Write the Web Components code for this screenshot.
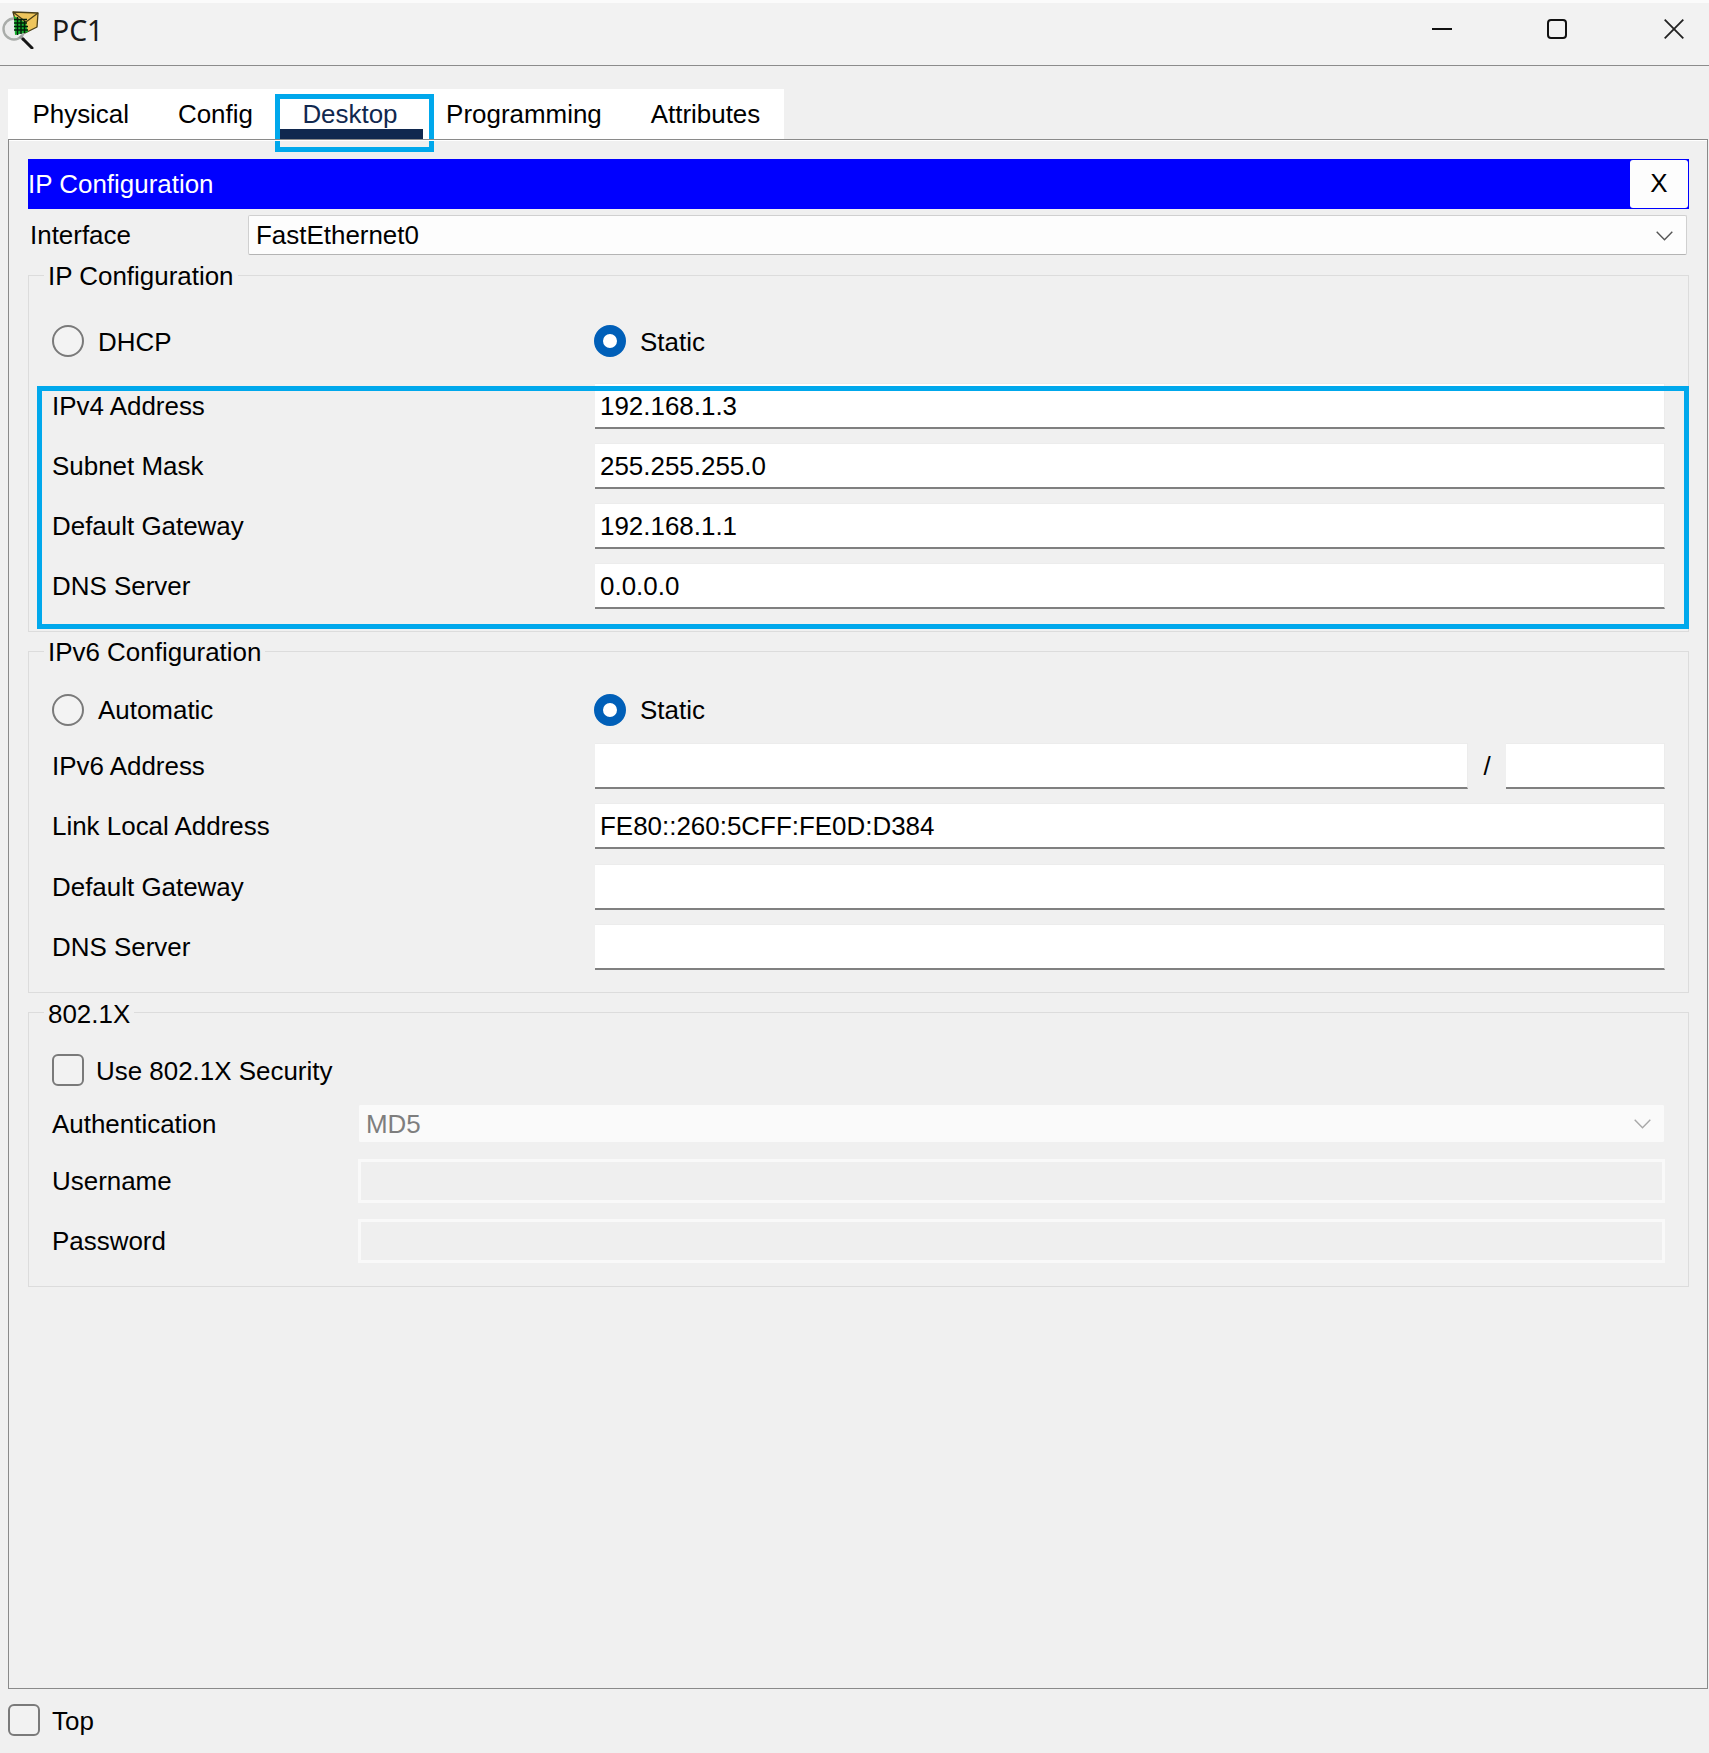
<!DOCTYPE html>
<html lang="en"><head><meta charset="utf-8"><title>PC1</title>
<style>
html,body{margin:0;padding:0;background:#f0f0f0}
body{width:1709px;height:1753px;overflow:hidden;font:25.95px/30px "Liberation Sans",Arial,sans-serif;color:#000}
</style></head><body>
<pt-window>
  <pt-titlebar slot="title">PC1</pt-titlebar>
  <pt-tabs slot="tabs">
    <pt-tab>Physical</pt-tab><pt-tab>Config</pt-tab><pt-tab active>Desktop</pt-tab><pt-tab>Programming</pt-tab><pt-tab>Attributes</pt-tab>
  </pt-tabs>
  <pt-panel slot="panel">
    <pt-appbar>IP Configuration</pt-appbar>
    <pt-row col="218px" style="margin:6px 2px 0 2px;height:40px">Interface<pt-select slot="control">FastEthernet0</pt-select></pt-row>
    <pt-group style="margin-top:5px;--pb:22px"><span slot="legend">IP Configuration</span>
      <pt-choice style="margin-top:35px;--ty:2px"><pt-radio>DHCP</pt-radio><pt-radio checked slot="second">Static</pt-radio></pt-choice>
      <pt-row style="margin-top:26px">IPv4 Address<pt-input slot="control">192.168.1.3</pt-input></pt-row>
      <pt-row>Subnet Mask<pt-input slot="control">255.255.255.0</pt-input></pt-row>
      <pt-row>Default Gateway<pt-input slot="control">192.168.1.1</pt-input></pt-row>
      <pt-row>DNS Server<pt-input slot="control">0.0.0.0</pt-input></pt-row>
    </pt-group>
    <pt-group style="margin-top:4px;--pb:22px"><span slot="legend">IPv6 Configuration</span>
      <pt-choice style="margin-top:28px"><pt-radio>Automatic</pt-radio><pt-radio checked slot="second">Static</pt-radio></pt-choice>
      <pt-row style="margin-top:17px">IPv6 Address<pt-split slot="control"><pt-input></pt-input><pt-input slot="tail"></pt-input></pt-split></pt-row>
      <pt-row>Link Local Address<pt-input slot="control">FE80::260:5CFF:FE0D:D384</pt-input></pt-row>
      <pt-row style="margin-top:15px">Default Gateway<pt-input slot="control"></pt-input></pt-row>
      <pt-row>DNS Server<pt-input slot="control"></pt-input></pt-row>
    </pt-group>
    <pt-group style="margin-top:4px;--pb:23px;--lh:34px"><span slot="legend">802.1X</span>
      <pt-check gap="12px" style="margin-top:27px;--ty:2px">Use 802.1X Security</pt-check>
      <pt-row col="306px" style="margin-top:18px;height:39px">Authentication<pt-select slot="control" disabled>MD5</pt-select></pt-row>
      <pt-row col="306px" style="margin-top:16px;height:44px">Username<pt-disabled-input slot="control"></pt-disabled-input></pt-row>
      <pt-row col="306px" style="margin-top:16px;height:44px">Password<pt-disabled-input slot="control"></pt-disabled-input></pt-row>
    </pt-group>
    <pt-highlight style="left:28px;top:246px;width:1652px;height:243px"></pt-highlight>
  </pt-panel>
  <pt-check slot="footer" gap="12px" style="margin:15px 0 0 8px;--ty:2px">Top</pt-check>
</pt-window>
<script>
const def=(name,css,html,extra)=>{
  class C extends HTMLElement{
    constructor(){super();const r=this.attachShadow({mode:'open'});r.innerHTML='<style>'+css+'</style>'+html;}
    connectedCallback(){if(extra)extra(this)}
  }
  customElements.define(name,C);
};
def('pt-window',':host{display:block;position:relative;width:1709px;height:1753px}',
 '<slot name="title"></slot><slot name="tabs"></slot><slot name="panel"></slot><slot name="footer"></slot>');
def('pt-titlebar',`:host{display:flex;align-items:flex-start;box-sizing:border-box;height:66px;border-top:3px solid #fbfbfb;border-bottom:1px solid #8c8c8c;background:#f2f2f2;color:#1a1a1a;font:28.4px/32px "Noto Sans","Open Sans",sans-serif}
 .logo{width:40px;height:42px;margin:4px 11px 0 2px;flex:none}
 .t{flex:1;margin:11px 0 0 -1px}
 .b{width:20px;height:20px;flex:none;display:block;margin-top:16px}`,
 `<svg class="logo" viewBox="0 0 40 42" aria-hidden="true">
   <circle cx="12" cy="22" r="10.5" fill="#ececec" stroke="#a9aca9" stroke-width="2.4"/>
   <path d="M11 5 L36 6 L35 20 L23 26 L15 20Z" fill="#eec55c" stroke="#4a3f17" stroke-width="1.3" stroke-linejoin="round"/>
   <path d="M11 5 L24 15 L36 6" fill="none" stroke="#4a3f17" stroke-width="1.3"/>
   <path d="M12 9 L24 16 L26 25 L13 28Z" fill="#16b22e"/>
   <path d="M12 12.5 H25 M12 16 H25 M12 19.5 H26 M12 23 H26 M15.5 10 V28 M19 12 V27 M22.5 14 V26" stroke="#04200a" stroke-width="1.5"/>
   <path d="M18 29 L22 33" stroke="#9a9a9a" stroke-width="3.2"/>
   <path d="M21 32 L30 41" stroke="#161616" stroke-width="3" stroke-linecap="round"/>
  </svg><span class="t"><slot></slot></span>
  <svg class="b" style="margin-right:95px" viewBox="0 0 20 20" aria-hidden="true"><path d="M0 10H20" stroke="#111" stroke-width="2"/></svg>
  <svg class="b" style="margin-right:97px" viewBox="0 0 20 20" aria-hidden="true"><rect x="1" y="1" width="18" height="18" rx="3" fill="none" stroke="#111" stroke-width="2"/></svg>
  <svg class="b" style="margin-right:25px" viewBox="0 0 20 20" aria-hidden="true"><path d="M.7 .7L19.3 19.3M19.3 .7L.7 19.3" stroke="#222" stroke-width="1.8"/></svg>`);
def('pt-tabs',':host{display:flex;width:776px;margin:23px 0 0 8px;background:#fff;height:50px}','<slot></slot>');
def('pt-tab',`:host{display:block;box-sizing:border-box;height:50px;line-height:50px;padding:0 24.45px;white-space:nowrap;position:relative}
 :host([active]){color:#10284f;margin:0 -1.3px 0 2.3px;padding:0 25.45px 0 22.75px;box-shadow:inset 0 -10px 0 #10284f}
 .hl{display:none;position:absolute;left:-5px;top:5px;width:159px;height:58px;box-sizing:border-box;border:5px solid #00a8ec;pointer-events:none}
 :host([active]) .hl{display:block}`,'<slot></slot><span class="hl"></span>');
def('pt-panel',`:host{display:block;position:relative;box-sizing:border-box;margin-left:8px;width:1700px;height:1550px;border:1px solid #8a8a8a;box-shadow:inset 0 1px 0 #fff;padding:19px 18px 0 19px}`,'<slot></slot>');
def('pt-appbar',`:host{display:flex;align-items:center;justify-content:space-between;box-sizing:border-box;height:50px;background:#00f;color:#fff;padding:0 1px 0 0}
 .x{width:58px;height:48px;box-sizing:border-box;background:#fdfdfd;border-radius:3px;color:#000;text-align:center;line-height:47px}`,
 '<span><slot></slot></span><span class="x">X</span>');
def('pt-row',`:host{display:grid;grid-template-columns:var(--col,543px) 1fr;align-items:center;height:46px;margin-top:14px}`,
 '<span><slot></slot></span><slot name="control"></slot>',
 el=>{const c=el.getAttribute('col');if(c)el.style.setProperty('--col',c)});
def('pt-input',`:host{display:flex;align-items:center;box-sizing:border-box;height:46px;min-width:0;background:#fff;border-top:1px solid #ececec;border-right:1px solid #ececec;border-bottom:2px solid #808080;padding:0 4px 0 5px}`,'<slot></slot>');
def('pt-disabled-input',`:host{display:block;box-sizing:border-box;height:44px;background:#efefef;border:3px solid #f9f9f9}`,'');
def('pt-select',`:host{display:flex;align-items:center;justify-content:space-between;box-sizing:border-box;height:40px;background:#fdfdfd;border:1px solid #d0d0d0;border-bottom:1px solid #b4b4b4;border-radius:2px;padding:0 13px 0 7px}
 :host([disabled]){height:39px;background:#fafafa;border:1px solid #f0f0f0;color:#7e7e7e;padding:0 13px 0 7px}
 svg{width:17px;height:10px;stroke:#555;flex:none;margin-top:1px}
 :host([disabled]) svg{stroke:#a8a8a8}`,
 '<span><slot></slot></span><svg viewBox="0 0 17 10" aria-hidden="true"><path d="M.7 .7L8.5 8.8L16.3 .7" fill="none" stroke-width="1.4"/></svg>');
def('pt-group',`:host{display:block}
 fieldset{margin:0;padding:0 23px var(--pb,22px);border:1px solid #dcdcdc;min-width:0}
 legend{margin-left:-8px;padding:0 4px;height:30px;line-height:var(--lh,32px)}`,
 '<fieldset><legend><slot name="legend"></slot></legend><slot></slot></fieldset>');
def('pt-choice',`:host{display:grid;grid-template-columns:542px 1fr;height:32px}`,'<slot></slot><slot name="second"></slot>');
def('pt-radio',`:host{display:flex;align-items:center;gap:14px;height:32px}
 span{padding-top:var(--ty,0)}
 i{display:block;box-sizing:border-box;width:32px;height:32px;border-radius:50%;border:2px solid #7a7a7a;background:#f3f3f3;flex:none}
 :host([checked]) i{border:9.5px solid #005fb8;background:#fff}`,'<i></i><span><slot></slot></span>');
def('pt-check',`:host{display:flex;align-items:center;height:32px}
 span{padding-top:var(--ty,0)}
 i{display:block;box-sizing:border-box;width:32px;height:32px;border-radius:6px;border:2px solid #7a7a7a;background:#f2f2f2;flex:none;margin-right:var(--g,11px)}`,
 '<i></i><span><slot></slot></span>',el=>{const g=el.getAttribute('gap');if(g)el.style.setProperty('--g',g)});
def('pt-split',`:host{display:grid;grid-template-columns:873px 38px 1fr;align-items:center}
 .s{text-align:center}`,'<slot></slot><span class="s">/</span><slot name="tail"></slot>');
def('pt-highlight',`:host{display:block;position:absolute;box-sizing:border-box;border:5px solid #00a8ec;pointer-events:none}`,'');
</script>
</body></html>
